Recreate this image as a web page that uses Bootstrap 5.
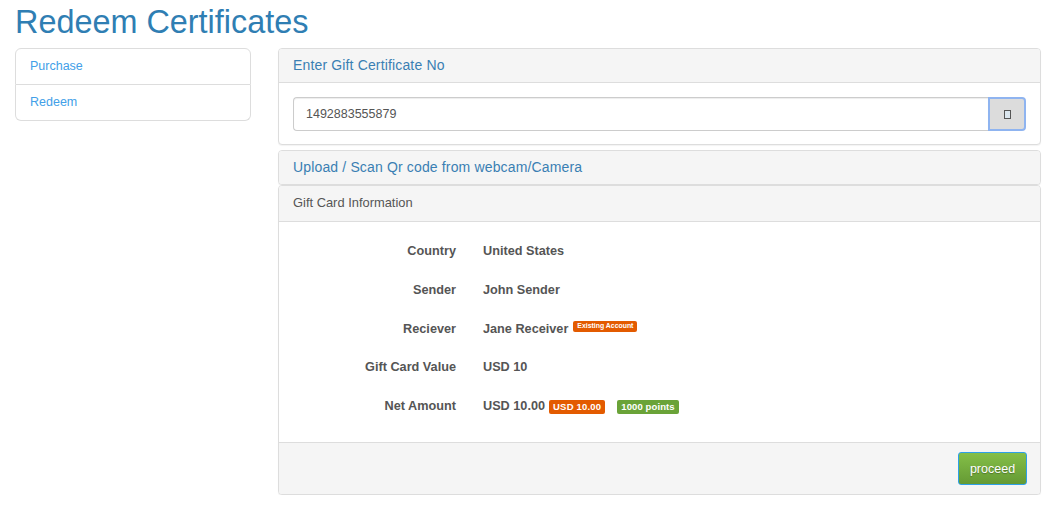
<!DOCTYPE html>
<html lang="en"><head><meta charset="utf-8"><title>Redeem Certificates</title>
<link href="https://cdn.jsdelivr.net/npm/bootstrap@5.3.0/dist/css/bootstrap.min.css" rel="stylesheet">
<style>
body{font-family:"Liberation Sans",Arial,sans-serif;font-size:14px;color:#555;background:#fff;line-height:20px}
.pg{padding:0 13px 0 15px}
.ttl{font-size:32.4px;line-height:36px;font-weight:400;color:#2f7eb3;margin:0;padding-top:4px;padding-bottom:8px;font-family:inherit}
.side{width:236px;flex:none}
.side .list-group-item{padding:7px 14px 8px;height:36px;color:#42a0e8;font-size:12.5px;border-color:#ddd;line-height:20px}
.side .list-group-item:first-child{height:37px}
.pnl{border:1px solid #ddd;border-radius:4px;box-shadow:0 1px 1px rgba(0,0,0,.05);overflow:hidden}
.pnl .card-header{background:#f5f5f5;border-bottom:1px solid #ddd;border-radius:0;padding:0 14px 2px;display:flex;align-items:center}
.pnl-a{margin-bottom:5px}
.hd1{height:34px;font-size:14px;color:#3a7fb3;letter-spacing:.15px}
.hd2{border-bottom:0!important;height:33px;padding-bottom:1px!important}
.hd3{height:36px;font-size:12.9px;color:#555}
.gcin{padding:14px 14px 13px}
.inp{height:34px;font-size:12.5px;color:#555;border:1px solid #ccc;border-right:0;border-radius:4px 0 0 4px;padding:6px 12px;box-shadow:inset 0 1px 1px rgba(0,0,0,.075)}
.qrb{width:38px;height:34px;flex:none;background:#dcdcdc;border:2px solid #8fb4f0;border-radius:0 4px 4px 0;padding:0;display:flex;align-items:center;justify-content:center}
.glyph{width:7px;height:9px;display:block;border:1px solid #555;background:#dbe6ee}
.gcbody{padding:9.8px 0 17.2px}
.inforow{height:38.7px;font-weight:700;font-size:12.7px;align-items:center;color:#555;gap:27px}
.lbl{width:177px;text-align:right;flex:none}
.val{display:flex;align-items:center}
.tg{font-weight:700;color:#fff;border-radius:2px;line-height:1}
.tgsm{font-size:6.9px;background:#e35b00;padding:2px 4px;margin-left:5px;position:relative;top:-2px}
.tgmd{font-size:9.5px;padding:2px 4px 3px;height:14px;display:inline-block;letter-spacing:.2px}
.tgo{background:#e35b00;margin-left:4px;margin-top:2px}
.tgg{background:#6aa338;margin-left:12px;margin-top:2px;letter-spacing:.1px}
.ftr{height:52px;background:#f5f5f5;border-top:1px solid #ddd;padding:0 13px 0 0}
.prc{width:69px;height:33px;padding:0;font-size:12.5px;font-weight:400;color:#fff;border:1px solid #2ea0e8;border-radius:3px;background:linear-gradient(#84bf48,#659a34);text-shadow:0 1px 1px rgba(0,0,0,.3)}
.colsgap{gap:27px}
</style></head>
<body>
<div class="pg">
<h1 class="ttl">Redeem Certificates</h1>
<div class="d-flex colsgap">
<div class="side">
<div class="list-group">
<a class="list-group-item text-decoration-none" href="#">Purchase</a>
<a class="list-group-item text-decoration-none" href="#">Redeem</a>
</div>
</div>
<div class="flex-grow-1">
<div class="card pnl pnl-a">
<div class="card-header hd1">Enter Gift Certificate No</div>
<div class="d-flex gcin">
<input class="form-control inp" value="1492883555879" aria-label="Certificate number">
<button class="btn qrb" type="button" aria-label="Scan"><span class="glyph"></span></button>
</div>
</div>
<div class="card pnl">
<div class="card-header hd1 hd2">Upload / Scan Qr code from webcam/Camera</div>
</div>
<div class="card pnl">
<div class="card-header hd3">Gift Card Information</div>
<div class="gcbody">
<div class="d-flex inforow"><div class="lbl">Country</div><div class="val">United States</div></div>
<div class="d-flex inforow"><div class="lbl">Sender</div><div class="val">John Sender</div></div>
<div class="d-flex inforow"><div class="lbl">Reciever</div><div class="val">Jane Receiver<span class="tg tgsm">Existing Account</span></div></div>
<div class="d-flex inforow"><div class="lbl">Gift Card Value</div><div class="val">USD 10</div></div>
<div class="d-flex inforow"><div class="lbl">Net Amount</div><div class="val">USD 10.00<span class="tg tgmd tgo">USD 10.00</span><span class="tg tgmd tgg">1000 points</span></div></div>
</div>
<div class="ftr d-flex align-items-center justify-content-end"><button class="btn prc" type="button">proceed</button></div>
</div>
</div>
</div>
</div>
</body></html>
